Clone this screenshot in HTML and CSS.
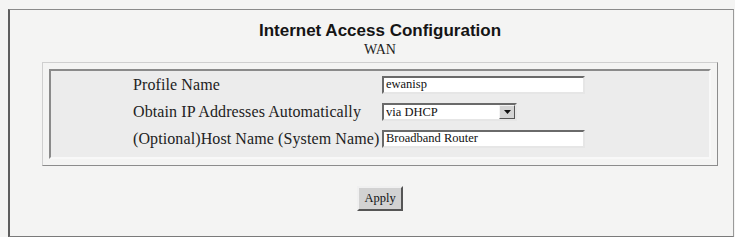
FILE: index.html
```html
<!DOCTYPE html>
<html>
<head>
<meta charset="utf-8">
<title>Internet Access Configuration</title>
<link rel="stylesheet" href="styles.css">
</head>
<body>
<div class="frame">
  <div class="content">
    <h1 class="title">Internet Access Configuration</h1>
    <div class="subtitle">WAN</div>
    <div class="box">
      <div class="panel">
        <div class="form">
          <label class="label" for="profile">Profile Name</label>
          <div class="field"><input id="profile" class="text" type="text" value="ewanisp"></div>
          <label class="label" for="obtain">Obtain IP Addresses Automatically</label>
          <div class="field">
            <span class="select">
              <select id="obtain"><option>via DHCP</option></select>
              <span class="arrow"><svg width="7" height="4" viewBox="0 0 7 4"><path d="M0 0H7L3.5 4Z" fill="#111"/></svg></span>
            </span>
          </div>
          <label class="label" for="host">(Optional)Host Name (System Name)</label>
          <div class="field"><input id="host" class="text" type="text" value="Broadband Router"></div>
        </div>
      </div>
    </div>
    <div class="actions"><button class="apply" type="button">Apply</button></div>
  </div>
</div>
</body>
</html>
```

FILE: styles.css
```css
html, body {
  margin: 0;
  padding: 0;
  background: #f4f4f3;
}
body {
  padding: 9px 0 0 8px;
  width: 735px;
  height: 237px;
  box-sizing: border-box;
  overflow: hidden;
}
.frame {
  box-sizing: border-box;
  width: 726px;
  height: 228px;
  border-left: 2px solid #5e5e5e;
  border-top: 1px solid #8a8a8a;
  border-right: 1px solid #9a9a9a;
  border-bottom: 1px solid #7a7a7a;
}
.content {
  margin-left: 32px;
  width: 676px;
}
.title {
  margin: 12px 0 0 0;
  font: bold 17px/18px "Liberation Sans", Arial, sans-serif;
  color: #151515;
  text-align: center;
}
.subtitle {
  margin-top: 2px;
  font: 14px/16px "Liberation Serif", "Times New Roman", serif;
  color: #222;
  text-align: center;
}
.box {
  margin-top: 4px;
  border: 1px solid;
  border-color: #cfcfcf #8c8c8c #8c8c8c #cfcfcf;
  padding: 6px;
}
.panel {
  border: 2px solid;
  border-color: #8a8a8a #f8f8f8 #f8f8f8 #8a8a8a;
  background: #ececec;
  padding: 0 0 5px 82px;
}
.form {
  display: grid;
  grid-template-columns: 249px auto;
  grid-auto-rows: 27px;
  align-items: center;
}
.label {
  font: 16px/18px "Liberation Serif", "Times New Roman", serif;
  letter-spacing: 0.1px;
  color: #222;
  white-space: nowrap;
}
.field {
  display: flex;
  align-items: center;
}
.text {
  box-sizing: border-box;
  width: 203px;
  height: 18px;
  margin: 0;
  padding: 0 2px;
  border: 2px solid;
  border-color: #6a6a6a #e6e6e6 #e6e6e6 #6a6a6a;
  background: #fff;
  font: 12.5px "Liberation Serif", "Times New Roman", serif;
  color: #111;
  outline: none;
}
.select {
  box-sizing: border-box;
  display: flex;
  width: 135px;
  height: 18px;
  border: 2px solid;
  border-color: #6a6a6a #e6e6e6 #e6e6e6 #6a6a6a;
  background: #fff;
}
.select select {
  flex: 1;
  min-width: 0;
  -webkit-appearance: none;
  appearance: none;
  border: 0;
  margin: 0;
  padding: 0 2px;
  background: #fff;
  font: 12.5px "Liberation Serif", "Times New Roman", serif;
  color: #111;
  outline: none;
}
.arrow {
  box-sizing: border-box;
  width: 16px;
  display: flex;
  align-items: center;
  justify-content: center;
  background: #d4d4d4;
  border: 1px solid;
  border-color: #f4f4f4 #555 #555 #f4f4f4;
}
.actions {
  display: flex;
  justify-content: center;
  margin-top: 20px;
}
.apply {
  box-sizing: border-box;
  width: 46px;
  height: 25px;
  margin: 0;
  padding: 0;
  border: 2px solid;
  border-color: #f0f0f0 #555 #555 #f0f0f0;
  background: #d2d2d2;
  font: 12.5px "Liberation Serif", "Times New Roman", serif;
  color: #111;
}
```
